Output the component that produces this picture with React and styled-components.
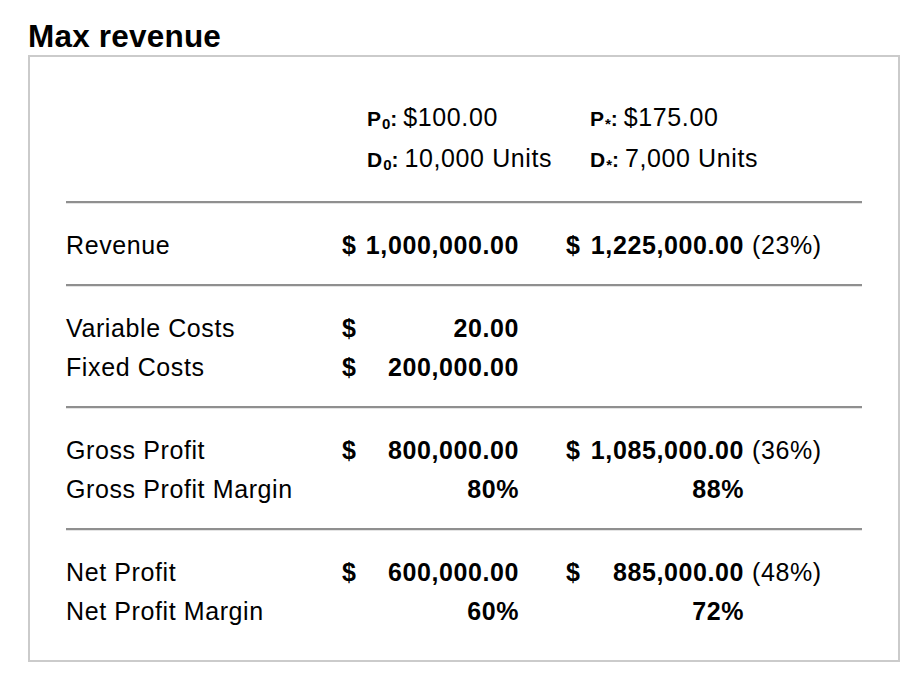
import React from "react";
import styled, { createGlobalStyle } from "styled-components";

const GlobalStyle = createGlobalStyle`
  html, body { margin: 0; padding: 0; background: #fff; }
  body {
    font-family: "Liberation Sans", Arial, Helvetica, sans-serif;
    color: #000;
    -webkit-font-smoothing: antialiased;
  }
`;

const Page = styled.div`
  padding: 18px 0 0 28px;
  width: 872px;
`;

const Title = styled.h2`
  margin: 0 0 1px 0;
  font-size: 31.5px;
  line-height: 36px;
  font-weight: 700;
  letter-spacing: 0.2px;
`;

const Card = styled.div`
  border: 2px solid #cbcbcb;
  padding: 40px 36px 10px 36px;
`;

const HeaderGrid = styled.div`
  display: grid;
  grid-template-columns: 223px auto;
  padding-left: 301px;
  margin-bottom: 22px;
`;

const Param = styled.div`
  white-space: nowrap;
  font-size: 25px;
  line-height: 41px;
  height: 41px;
`;

const ParamLabel = styled.span`
  font-size: 21px;
  line-height: 1;
  font-weight: 700;
`;

const ParamSub = styled.span`
  font-size: 15px;
  line-height: 1;
  font-weight: 700;
  position: relative;
  top: 3px;
  margin-left: 1px;
`;

const ParamValue = styled.span`
  letter-spacing: 0.6px;
  margin-left: 6px;
`;

const Rule = styled.div`
  height: 0;
  border-top: 2px solid #8f8f8f;
  border-bottom: 1px solid #e4e4e4;
`;

const Section = styled.div`
  padding: 22px 0 19px;
`;

const Row = styled.div`
  display: grid;
  grid-template-columns: 276px 177px 225px auto;
  font-size: 25px;
  line-height: 39px;
  letter-spacing: 0.6px;
  white-space: nowrap;
`;

const Label = styled.div``;

const Money = styled.div`
  display: flex;
  justify-content: ${(p) => (p.$only ? "flex-end" : "space-between")};
  font-weight: 700;
  padding-left: ${(p) => (p.$offset ? "47px" : "0")};
`;

const Note = styled.div`
  padding-left: 8px;
`;

const params = [
  { l: "P", s: "0", v: "$100.00" },
  { l: "P", s: "*", v: "$175.00" },
  { l: "D", s: "0", v: "10,000 Units" },
  { l: "D", s: "*", v: "7,000 Units" },
];

const sections = [
  [
    { label: "Revenue", a: "1,000,000.00", b: "1,225,000.00", note: "(23%)" },
  ],
  [
    { label: "Variable Costs", a: "20.00" },
    { label: "Fixed Costs", a: "200,000.00" },
  ],
  [
    { label: "Gross Profit", a: "800,000.00", b: "1,085,000.00", note: "(36%)" },
    { label: "Gross Profit Margin", a: "80%", b: "88%", pct: true },
  ],
  [
    { label: "Net Profit", a: "600,000.00", b: "885,000.00", note: "(48%)" },
    { label: "Net Profit Margin", a: "60%", b: "72%", pct: true },
  ],
];

function Cell({ value, pct, offset }) {
  if (value == null) return <div />;
  if (pct) {
    return (
      <Money $only $offset={offset}>
        <span>{value}</span>
      </Money>
    );
  }
  return (
    <Money $offset={offset}>
      <span>$</span>
      <span>{value}</span>
    </Money>
  );
}

export default function App() {
  return (
    <>
      <GlobalStyle />
      <Page>
        <Title>Max revenue</Title>
        <Card>
          <HeaderGrid>
            {params.map((p, i) => (
              <Param key={i}>
                <ParamLabel>
                  {p.l}
                  <ParamSub>{p.s}</ParamSub>:
                </ParamLabel>
                <ParamValue>{p.v}</ParamValue>
              </Param>
            ))}
          </HeaderGrid>
          {sections.map((rows, i) => (
            <React.Fragment key={i}>
              <Rule />
              <Section>
                {rows.map((r, j) => (
                  <Row key={j}>
                    <Label>{r.label}</Label>
                    <Cell value={r.a} pct={r.pct} />
                    <Cell value={r.b} pct={r.pct} offset />
                    {r.note ? <Note>{r.note}</Note> : <div />}
                  </Row>
                ))}
              </Section>
            </React.Fragment>
          ))}
        </Card>
      </Page>
    </>
  );
}
